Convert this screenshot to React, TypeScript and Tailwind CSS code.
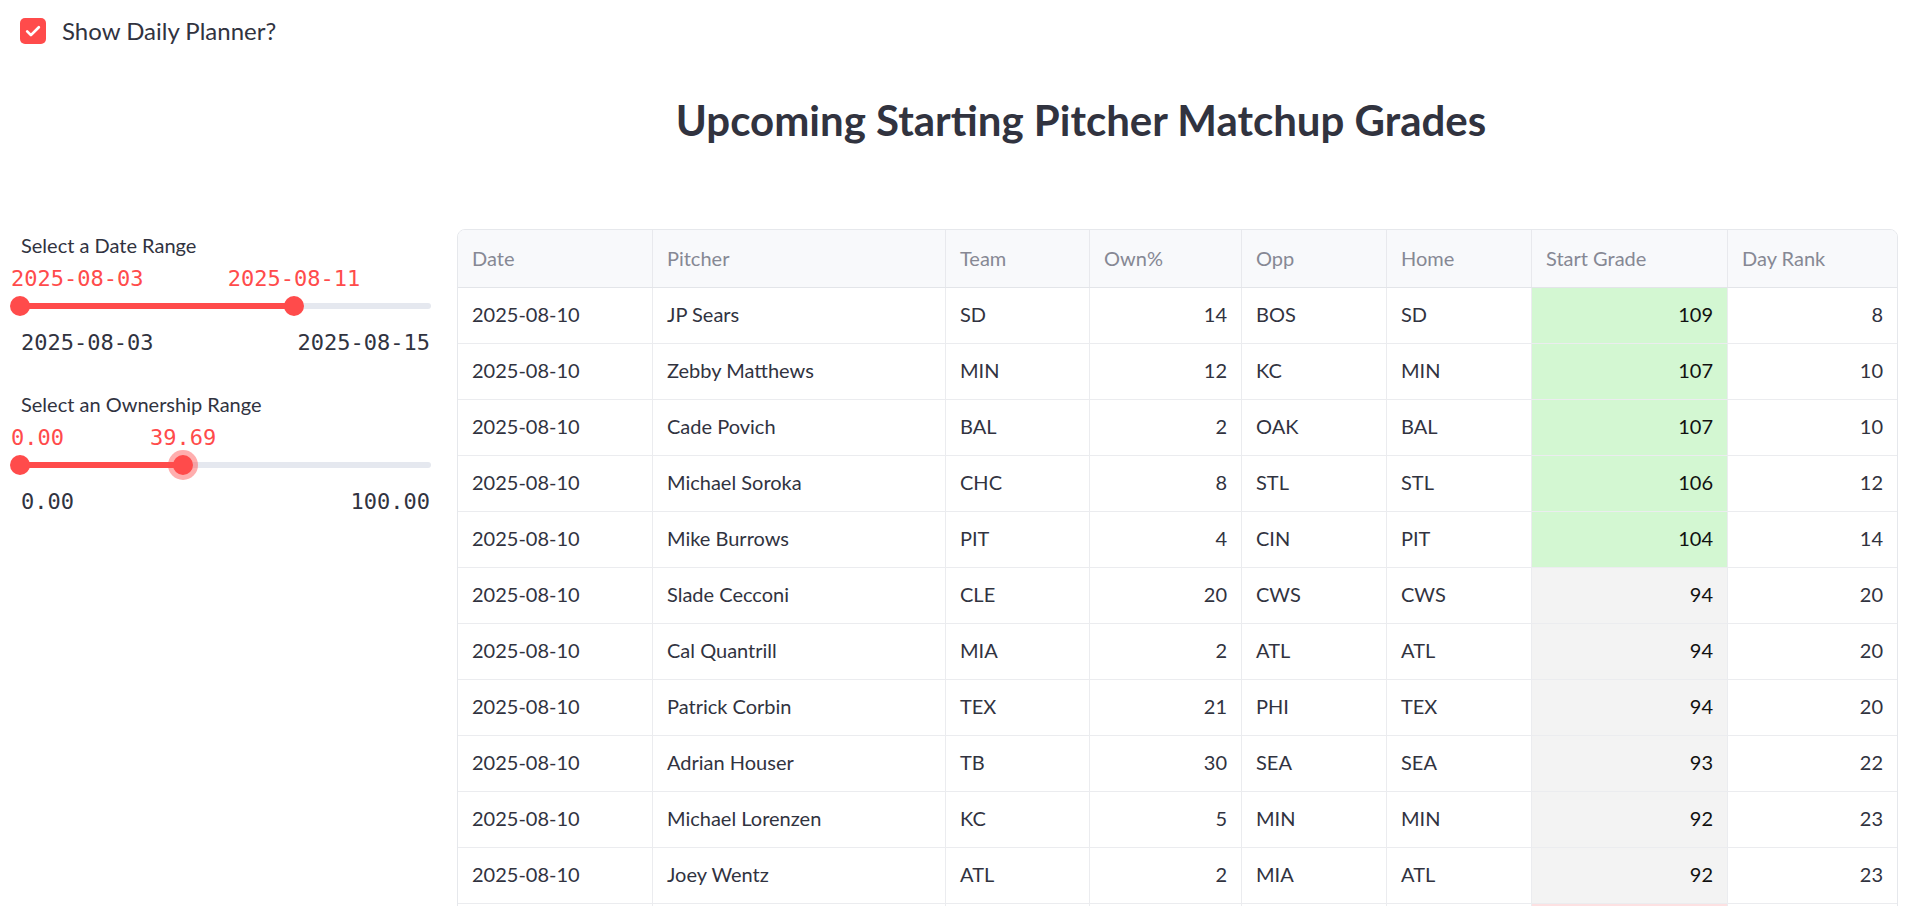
import React from "react";

type Row = {
  date: string;
  pitcher: string;
  team: string;
  own: number;
  opp: string;
  home: string;
  grade: number;
  rank: number;
};

const rows: Row[] = [
  { date: "2025-08-10", pitcher: "JP Sears", team: "SD", own: 14, opp: "BOS", home: "SD", grade: 109, rank: 8 },
  { date: "2025-08-10", pitcher: "Zebby Matthews", team: "MIN", own: 12, opp: "KC", home: "MIN", grade: 107, rank: 10 },
  { date: "2025-08-10", pitcher: "Cade Povich", team: "BAL", own: 2, opp: "OAK", home: "BAL", grade: 107, rank: 10 },
  { date: "2025-08-10", pitcher: "Michael Soroka", team: "CHC", own: 8, opp: "STL", home: "STL", grade: 106, rank: 12 },
  { date: "2025-08-10", pitcher: "Mike Burrows", team: "PIT", own: 4, opp: "CIN", home: "PIT", grade: 104, rank: 14 },
  { date: "2025-08-10", pitcher: "Slade Cecconi", team: "CLE", own: 20, opp: "CWS", home: "CWS", grade: 94, rank: 20 },
  { date: "2025-08-10", pitcher: "Cal Quantrill", team: "MIA", own: 2, opp: "ATL", home: "ATL", grade: 94, rank: 20 },
  { date: "2025-08-10", pitcher: "Patrick Corbin", team: "TEX", own: 21, opp: "PHI", home: "TEX", grade: 94, rank: 20 },
  { date: "2025-08-10", pitcher: "Adrian Houser", team: "TB", own: 30, opp: "SEA", home: "SEA", grade: 93, rank: 22 },
  { date: "2025-08-10", pitcher: "Michael Lorenzen", team: "KC", own: 5, opp: "MIN", home: "MIN", grade: 92, rank: 23 },
  { date: "2025-08-10", pitcher: "Joey Wentz", team: "ATL", own: 2, opp: "MIA", home: "ATL", grade: 92, rank: 23 },
];

const gridCols = "grid grid-cols-[195px_293px_144px_152px_145px_145px_196px_169px]";

function gradeBg(g: number) {
  if (g >= 100) return "bg-[#d3f7d2]";
  if (g >= 90) return "bg-[#f3f3f3]";
  return "bg-[#fde1e2]";
}

// thumb centres run from 9px to 420px inside the 420px track box
function RangeSlider({
  label,
  lo,
  hi,
  loText,
  hiText,
  minText,
  maxText,
  active,
}: {
  label: string;
  lo: number;
  hi: number;
  loText: string;
  hiText: string;
  minText: string;
  maxText: string;
  active?: boolean;
}) {
  const loX = 9 + lo * 411;
  const hiX = 9 + hi * 411;
  return (
    <div className="w-[420px]">
      <div className="pl-[10px] text-[20px] leading-[24px] text-[#31333f]">{label}</div>
      <div className="relative mt-[9px] h-[26px] font-['DejaVu_Sans_Mono',monospace] text-[22px] leading-[26px] text-[#ff4b4b]">
        <span className="absolute top-0 whitespace-nowrap" style={{ left: Math.max(0, loX - loText.length * 6.6) }}>
          {loText}
        </span>
        <span className="absolute top-0 -translate-x-1/2 whitespace-nowrap" style={{ left: hiX }}>
          {hiText}
        </span>
      </div>
      <div className="relative h-[28px]">
        <div className="absolute left-0 right-0 top-[11px] h-[6px] rounded-full bg-[#e5e8ef]" />
        <div className="absolute top-[11px] h-[6px] bg-[#ff4b4b]" style={{ left: loX, width: hiX - loX }} />
        <div className="absolute top-[4px] h-[20px] w-[20px] rounded-full bg-[#ff4b4b]" style={{ left: loX - 10 }} />
        {active && (
          <div className="absolute top-[-1px] h-[30px] w-[30px] rounded-full bg-[#ff4b4b]/45" style={{ left: hiX - 15 }} />
        )}
        <div className="absolute top-[4px] h-[20px] w-[20px] rounded-full bg-[#ff4b4b]" style={{ left: hiX - 10 }} />
      </div>
      <div className="mt-[10px] flex justify-between pl-[10px] pr-[1px] font-['DejaVu_Sans_Mono',monospace] text-[22px] leading-[26px] text-[#31333f]">
        <span>{minText}</span>
        <span>{maxText}</span>
      </div>
    </div>
  );
}

export default function App() {
  return (
    <div className="h-[906px] w-[1914px] overflow-hidden bg-white pt-[18px] font-['Lato',sans-serif] text-[#31333f]">
      {/* checkbox */}
      <div className="flex h-[26px] items-center gap-[16px] pl-[20px]">
        <div className="flex h-[26px] w-[26px] items-center justify-center rounded-[5px] bg-[#ff4b4b]">
          <svg viewBox="0 0 24 24" className="h-[20px] w-[20px]" fill="none" stroke="white" strokeWidth={3.2} strokeLinecap="round" strokeLinejoin="round">
            <path d="M5 12.5l4.5 4.5L19 7.5" />
          </svg>
        </div>
        <span className="text-[24px] leading-[26px]">Show Daily Planner?</span>
      </div>

      <h1 className="mt-[51px] h-[50px] pl-[248px] text-center text-[42px] font-bold leading-[50px] text-[#31333f]">
        Upcoming Starting Pitcher Matchup Grades
      </h1>

      <div className="mt-[84px] flex">
        {/* filters */}
        <div className="w-[441px] shrink-0 pl-[11px] pt-[4px]">
          <RangeSlider
            label="Select a Date Range"
            lo={0}
            hi={8 / 12}
            loText="2025-08-03"
            hiText="2025-08-11"
            minText="2025-08-03"
            maxText="2025-08-15"
          />
          <div className="mt-[36px]">
            <RangeSlider
              label="Select an Ownership Range"
              lo={0}
              hi={0.3969}
              loText="0.00"
              hiText="39.69"
              minText="0.00"
              maxText="100.00"
              active
            />
          </div>
        </div>

        {/* table */}
        <div className="ml-[16px] w-[1441px] shrink-0 overflow-hidden rounded-t-[8px] border border-[#e6e8ec] text-[20px]">
          <div className={`${gridCols} h-[58px] border-b border-[#e3e5e9] bg-[#f8f9fb] text-[#868894]`}>
            {["Date", "Pitcher", "Team", "Own%", "Opp", "Home", "Start Grade", "Day Rank"].map((h, i) => (
              <div key={h} className={`flex items-center px-[14px] pb-[2px] ${i < 7 ? "border-r border-[#e8e9ed]" : ""}`}>
                {h}
              </div>
            ))}
          </div>
          {rows.map((r, idx) => (
            <div key={idx} className={`${gridCols} h-[56px] border-b border-[#ebecef]`}>
              <div className="flex items-center border-r border-[#ebecef] px-[14px] pb-[4px]">{r.date}</div>
              <div className="flex items-center border-r border-[#ebecef] px-[14px] pb-[4px]">{r.pitcher}</div>
              <div className="flex items-center border-r border-[#ebecef] px-[14px] pb-[4px]">{r.team}</div>
              <div className="flex items-center justify-end border-r border-[#ebecef] px-[14px] pb-[4px]">{r.own}</div>
              <div className="flex items-center border-r border-[#ebecef] px-[14px] pb-[4px]">{r.opp}</div>
              <div className="flex items-center border-r border-[#ebecef] px-[14px] pb-[4px]">{r.home}</div>
              <div className={`flex items-center justify-end border-r border-[#ebecef] px-[14px] pb-[4px] text-[#111] ${gradeBg(r.grade)}`}>
                {r.grade}
              </div>
              <div className="flex items-center justify-end px-[14px] pb-[4px]">{r.rank}</div>
            </div>
          ))}
          {/* next row, only its top edge is on screen */}
          <div className={`${gridCols} h-[56px]`}>
            <div className="border-r border-[#ebecef]" />
            <div className="border-r border-[#ebecef]" />
            <div className="border-r border-[#ebecef]" />
            <div className="border-r border-[#ebecef]" />
            <div className="border-r border-[#ebecef]" />
            <div className="border-r border-[#ebecef]" />
            <div className="border-r border-[#ebecef] bg-[#fde1e2]" />
            <div />
          </div>
        </div>
      </div>
    </div>
  );
}
